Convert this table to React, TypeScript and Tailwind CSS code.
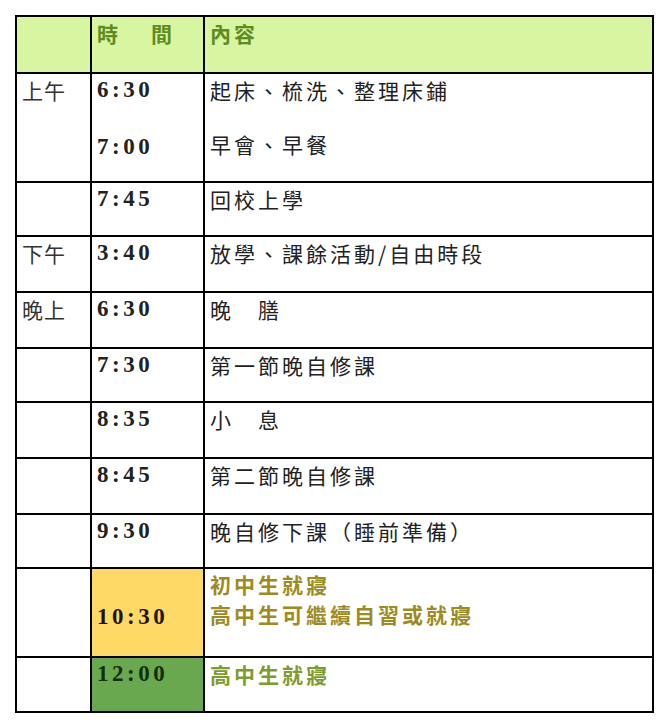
import React from "react";

const cjk = "font-['Noto_Sans_CJK_TC','Noto_Sans_CJK_SC',sans-serif]";
const num = "font-['Liberation_Serif',serif] font-bold text-[23px] tracking-[3.5px]";
const cell = "border-2 border-black align-top px-[5px] leading-[32px]";

type Row = {
  period?: string;
  times: string[];
  items: string[];
  h: number;
};

const rows: Row[] = [
  { period: "上午", times: ["6:30", "7:00"], items: ["起床、梳洗、整理床鋪", "早會、早餐"], h: 109 },
  { times: ["7:45"], items: ["回校上學"], h: 54 },
  { period: "下午", times: ["3:40"], items: ["放學、課餘活動/自由時段"], h: 56 },
  { period: "晚上", times: ["6:30"], items: ["晚　膳"], h: 56 },
  { times: ["7:30"], items: ["第一節晚自修課"], h: 54 },
  { times: ["8:35"], items: ["小　息"], h: 56 },
  { times: ["8:45"], items: ["第二節晚自修課"], h: 56 },
  { times: ["9:30"], items: ["晚自修下課（睡前準備）"], h: 54 },
];

export default function App() {
  return (
    <div className="w-[670px] h-[728px] bg-white pt-[15px] pl-[15px]">
      <table className="border-collapse table-fixed w-[639px] text-[#222]">
        <colgroup>
          <col className="w-[75px]" />
          <col className="w-[113px]" />
          <col />
        </colgroup>
        <tbody>
          <tr className="h-[57px] bg-[#d8f5a2]">
            <td className={cell}></td>
            <td className={`${cell} ${cjk} font-bold text-[21px] text-[#5e8c1e] tracking-[3px]`}>
              時<span className="inline-block w-[30px]"></span>間
            </td>
            <td className={`${cell} ${cjk} font-bold text-[21px] text-[#5e8c1e] tracking-[3px]`}>內容</td>
          </tr>
          {rows.map((r, i) => (
            <tr key={i} style={{ height: r.h }}>
              <td className={`${cell} ${cjk} text-[21px] text-[#333] tracking-[1px]`}>{r.period}</td>
              <td className={`${cell} ${num}`}>
                {r.times.map((t, j) => (
                  <div key={j} className={j > 0 ? "mt-[25px]" : ""}>
                    {t}
                  </div>
                ))}
              </td>
              <td className={`${cell} ${cjk} text-[21px] tracking-[3px]`}>
                {r.items.map((t, j) => (
                  <div key={j} className={j > 0 ? "mt-[22px]" : ""}>
                    {t}
                  </div>
                ))}
              </td>
            </tr>
          ))}
          <tr className="h-[89px]">
            <td className={cell}></td>
            <td className={`${cell} ${num} bg-[#ffd966] !align-middle text-[#1e1608]`}>
              <div className="pt-[8px]">10:30</div>
            </td>
            <td className={`${cell} ${cjk} font-bold text-[21px] tracking-[3px] text-[#9d8b22] !leading-[30px]`}>
              <div>初中生就寢</div>
              <div>高中生可繼續自習或就寢</div>
            </td>
          </tr>
          <tr className="h-[55px]">
            <td className={cell}></td>
            <td className={`${cell} ${num} bg-[#6aa84f] text-[#14300a]`}>12:00</td>
            <td className={`${cell} ${cjk} font-bold text-[21px] tracking-[3px] text-[#7f9b2f]`}>高中生就寢</td>
          </tr>
        </tbody>
      </table>
    </div>
  );
}
